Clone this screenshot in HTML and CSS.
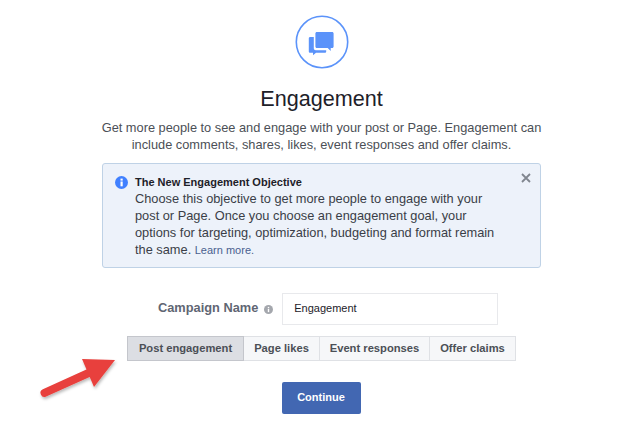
FILE: index.html
```html
<!DOCTYPE html>
<html lang="en">
<head>
<meta charset="utf-8">
<title>Engagement</title>
<link rel="stylesheet" href="styles.css">
</head>
<body>
<main class="page">
  <svg class="hero-icon" width="54" height="54" viewBox="0 0 54 54" aria-hidden="true">
    <circle cx="27" cy="27" r="25.7" fill="#fff" stroke="#5b93fa" stroke-width="1.6"/>
    <path d="M15.200 22h3.600v11.200c0 1.200.8 2 2 2h10.400v1.200c0 .8-.6 1.400-1.400 1.400H21l-3 2.500v-2.500h-2.800c-.8 0-1.400-.6-1.400-1.400V23.400c0-.8.6-1.400 1.400-1.400z" fill="#5b93fa"/>
    <path d="M21.900 17h15.200c.9 0 1.500.6 1.500 1.500v13c0 .9-.6 1.500-1.500 1.500h-1.400v3l-3-3H21.900c-.9 0-1.500-.6-1.500-1.500v-13c0-.9.6-1.500 1.500-1.500z" fill="#5b93fa"/>
  </svg>
  <h1 class="title">Engagement</h1>
  <p class="lead">Get more people to see and engage with your post or Page. Engagement can include comments, shares, likes, event responses and offer claims.</p>

  <section class="notice">
    <svg class="notice-icon" width="13" height="13" viewBox="0 0 13 13" aria-hidden="true">
      <circle cx="6.500" cy="6.500" r="6.500" fill="#4080ff"/>
      <rect x="5.500" y="5.500" width="2.200" height="4.800" fill="#fff"/>
      <rect x="5.500" y="2.600" width="2.200" height="2" fill="#fff"/>
    </svg>
    <div class="notice-text">
      <h2 class="notice-title">The New Engagement Objective</h2>
      <p class="notice-body">Choose this objective to get more people to engage with your post or Page. Once you choose an engagement goal, your options for targeting, optimization, budgeting and format remain the same. <a class="learn" href="#">Learn more.</a></p>
    </div>
    <svg class="notice-close" width="10" height="10" viewBox="0 0 10 10" aria-hidden="true">
      <path d="M1 1l8 8M9 1l-8 8" stroke="#80868f" stroke-width="1.800" fill="none"/>
    </svg>
  </section>

  <div class="name-row">
    <label class="name-label" for="campaign">Campaign Name</label>
    <svg class="name-help" width="9" height="9" viewBox="0 0 9 9" aria-hidden="true">
      <circle cx="4.500" cy="4.500" r="4.500" fill="#a4a7ad"/>
      <rect x="3.800" y="3.900" width="1.400" height="3.200" fill="#fff"/>
      <rect x="3.800" y="1.900" width="1.400" height="1.300" fill="#fff"/>
    </svg>
    <input class="name-input" id="campaign" type="text" value="Engagement">
  </div>

  <div class="tabs">
    <button class="tab tab-active" type="button">Post engagement</button>
    <button class="tab" type="button">Page likes</button>
    <button class="tab" type="button">Event responses</button>
    <button class="tab" type="button">Offer claims</button>
  </div>

  <button class="continue" type="button">Continue</button>
</main>

<svg class="arrow" width="84" height="50" viewBox="0 0 84 50" aria-hidden="true">
  <defs>
    <filter id="arrow-shadow" x="-20%" y="-20%" width="140%" height="150%">
      <feDropShadow dx="1" dy="2" stdDeviation="1.800" flood-color="#000" flood-opacity=".28"/>
    </filter>
  </defs>
  <g filter="url(#arrow-shadow)" fill="#e8403c">
    <path d="M7.500 38.800L56 17" stroke="#e8403c" stroke-width="8" stroke-linecap="round" fill="none"/>
    <path d="M45 5L78 6 57 33z"/>
  </g>
</svg>
</body>
</html>
```

FILE: styles.css
```css
* { box-sizing: border-box; }

html, body { margin: 0; padding: 0; background: #fff; }

body {
  width: 619px;
  height: 441px;
  overflow: hidden;
  position: relative;
  font-family: "Liberation Sans", Arial, sans-serif;
  color: #2b2f38;
}

.page {
  width: 439px;
  margin-left: 102px;
  padding-top: 15px;
  display: flex;
  flex-direction: column;
  align-items: center;
}

.hero-icon { display: block; }

.title {
  margin: 15px 0 0;
  font-size: 21.600px;
  line-height: 30px;
  font-weight: 400;
  color: #1d2129;
}

.lead {
  margin: 6px 0 0;
  width: 445px;
  flex: none;
  font-size: 12.800px;
  line-height: 16.500px;
  text-align: center;
  color: #4b4f56;
}

.notice {
  position: relative;
  margin-top: 10px;
  width: 439px;
  height: 105px;
  display: flex;
  align-items: flex-start;
  padding: 11px 0 0 12px;
  background: #edf2fa;
  border: 1px solid #bfd2e6;
  border-radius: 3px;
}

.notice-icon { flex: none; margin: 1px 7px 0 0; }

.notice-text { width: 368px; }

.notice-title {
  margin: 0;
  font-size: 11px;
  line-height: 15px;
  font-weight: 700;
  color: #1d2129;
}

.notice-body {
  margin: 0;
  font-size: 12.800px;
  line-height: 17px;
  color: #3a3e47;
}

.learn {
  font-size: 11px;
  line-height: 1;
  color: #4a5f8f;
  text-decoration: none;
}

.notice-close {
  position: absolute;
  top: 9px;
  right: 9px;
}

.name-row {
  margin-top: 25px;
  align-self: flex-start;
  margin-left: 56px;
  display: flex;
  align-items: center;
  height: 32px;
}

.name-label {
  margin-bottom: 3px;
  font-size: 12.800px;
  font-weight: 700;
  color: #5f6673;
}

.name-help { margin: 0 0 0 6px; }

.name-input {
  margin-left: 9px;
  width: 216px;
  height: 32px;
  padding: 0 11px 2px;
  border: 1px solid #e8e9ec;
  background: #fff;
  font: 11px "Liberation Sans", Arial, sans-serif;
  color: #1d2129;
}

.tabs {
  margin-top: 11px;
  align-self: flex-start;
  margin-left: 25px;
  display: flex;
  height: 25px;
}

.tab {
  height: 25px;
  padding: 0 0 2px;
  border: 1px solid #dfe1e5;
  border-left-width: 0;
  background: #f6f7f9;
  font: 700 11.200px "Liberation Sans", Arial, sans-serif;
  color: #4b4f56;
}

.tab:nth-child(1) { width: 117px; border-left-width: 1px; }
.tab:nth-child(2) { width: 76px; }
.tab:nth-child(3) { width: 110px; }
.tab:nth-child(4) { width: 86px; }

.tab-active {
  background: #dcdee3;
  border-color: #c4c6cc;
}

.continue {
  margin-top: 21px;
  margin-left: -1px;
  width: 79px;
  height: 32px;
  padding: 0 0 2px;
  border: 0;
  border-radius: 2px;
  background: #4267b2;
  font: 700 11px "Liberation Sans", Arial, sans-serif;
  color: #fff;
}

.arrow {
  position: absolute;
  left: 37px;
  top: 354px;
}
```
